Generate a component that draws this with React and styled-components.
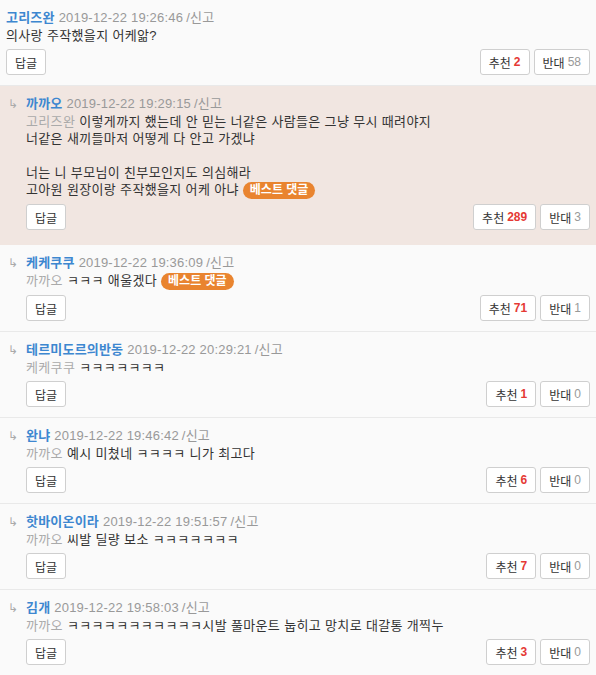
import React from 'react';
import styled, { createGlobalStyle } from 'styled-components';

const GlobalStyle = createGlobalStyle`
  html, body {
    margin: 0;
    padding: 0;
    background: #fafafa;
    font-family: "Liberation Sans", "Noto Sans CJK KR", sans-serif;
  }
  * { box-sizing: border-box; }
`;

const List = styled.div`
  width: 596px;
  background: #fafafa;
`;

const Item = styled.div`
  display: flex;
  padding: 9px 6px 10px 6px;
  background: ${props => (props.best ? '#f1e6e1' : '#fafafa')};
  border-bottom: 1px solid ${props => (props.best ? '#f1e6e1' : '#e9e9e9')};
  min-height: ${props => (props.best ? 159 : 0)}px;
`;

const Arrow = styled.div`
  width: 20px;
  flex: none;
  color: #aaa;
  font-size: 12px;
  line-height: 18px;
  padding-left: 2px;
`;

const Body = styled.div`
  flex: 1;
  min-width: 0;
`;

const Header = styled.div`
  font-size: 13px;
  line-height: 18px;
  color: #999;
  letter-spacing: 0.2px;
`;

const Name = styled.span`
  color: #3d87d0;
  font-weight: bold;
  margin-right: 4px;
`;

const Report = styled.span`
  margin-left: 3px;
`;

const Text = styled.div`
  font-size: 13px;
  line-height: 17px;
  color: #333;
  white-space: pre-wrap;
  letter-spacing: 0.35px;
`;

const Quote = styled.span`
  color: #aaa;
  margin-right: 4px;
`;

const Badge = styled.span`
  display: inline-block;
  margin-left: 4px;
  padding: 0 7px;
  height: 17px;
  line-height: 17px;
  border-radius: 9px;
  background: #e9842f;
  color: #fff;
  font-size: 12px;
  font-weight: bold;
  letter-spacing: 0;
`;

const Actions = styled.div`
  display: flex;
  align-items: center;
  margin-top: 5px;
`;

const Spacer = styled.div`
  flex: 1;
`;

const Button = styled.button`
  height: 26px;
  padding: 0 ${props => props.pad || 9}px;
  margin-left: ${props => (props.first ? 0 : 4)}px;
  background: #fff;
  border: 1px solid #cfcfcf;
  border-radius: 3px;
  font-family: inherit;
  font-size: 12px;
  color: #333;
  display: inline-flex;
  align-items: center;
  gap: 3px;
`;

const Count = styled.span`
  color: ${props => (props.up ? '#e53935' : '#999')};
  font-weight: ${props => (props.up ? 'bold' : 'normal')};
`;

const comments = [
  { name: '고리즈완', date: '2019-12-22 19:26:46', lines: ['의사랑 주작했을지 어케앎?'], up: 2, down: 58 },
  {
    reply: true, best: true, name: '까까오', date: '2019-12-22 19:29:15', quote: '고리즈완',
    lines: ['이렇게까지 했는데 안 믿는 너같은 사람들은 그냥 무시 때려야지', '너같은 새끼들마저 어떻게 다 안고 가겠냐', '', '너는 니 부모님이 친부모인지도 의심해라', '고아원 원장이랑 주작했을지 어케 아냐'],
    badge: true, up: 289, down: 3,
  },
  { reply: true, name: '케케쿠쿠', date: '2019-12-22 19:36:09', quote: '까까오', lines: ['ㅋㅋㅋ 애울겠다'], badge: true, up: 71, down: 1 },
  { reply: true, name: '테르미도르의반동', date: '2019-12-22 20:29:21', quote: '케케쿠쿠', lines: ['ㅋㅋㅋㅋㅋㅋㅋ'], up: 1, down: 0 },
  { reply: true, name: '완냐', date: '2019-12-22 19:46:42', quote: '까까오', lines: ['예시 미쳤네 ㅋㅋㅋㅋ 니가 최고다'], up: 6, down: 0 },
  { reply: true, name: '핫바이온이라', date: '2019-12-22 19:51:57', quote: '까까오', lines: ['씨발 딜량 보소 ㅋㅋㅋㅋㅋㅋㅋ'], up: 7, down: 0 },
  { reply: true, name: '김개', date: '2019-12-22 19:58:03', quote: '까까오', lines: ['ㅋㅋㅋㅋㅋㅋㅋㅋㅋㅋㅋ시발 풀마운트 눕히고 망치로 대갈통 개찍누'], up: 3, down: 0 },
];

const Comment = ({ c }) => (
  <Item best={c.best}>
    {c.reply && <Arrow>↳</Arrow>}
    <Body>
      <Header>
        <Name>{c.name}</Name>
        {c.date}<Report>/신고</Report>
      </Header>
      {c.lines.map((line, i) => (
        <Text key={i}>
          {i === 0 && c.quote && <Quote>{c.quote}</Quote>}
          {line || '\u00a0'}
          {i === c.lines.length - 1 && c.badge && <Badge>베스트 댓글</Badge>}
        </Text>
      ))}
      <Actions>
        <Button first pad={8}>답글</Button>
        <Spacer />
        <Button first pad={8}>추천 <Count up>{c.up}</Count></Button>
        <Button pad={8}>반대 <Count>{c.down}</Count></Button>
      </Actions>
    </Body>
  </Item>
);

export default function App() {
  return (
    <>
      <GlobalStyle />
      <List>
        {comments.map((c, i) => <Comment key={i} c={c} />)}
      </List>
    </>
  );
}
